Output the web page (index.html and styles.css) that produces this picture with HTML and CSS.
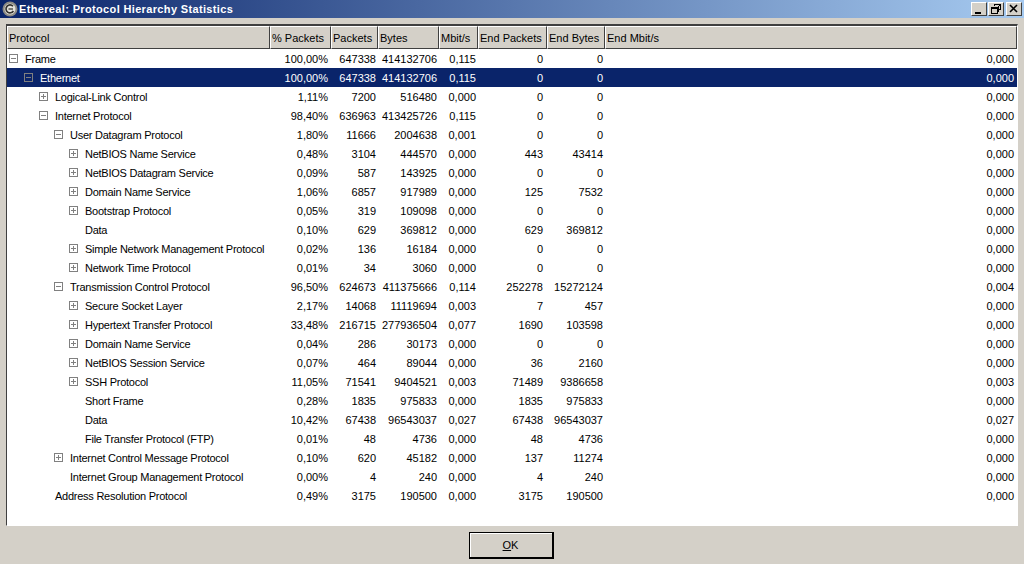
FILE: index.html
```html
<!DOCTYPE html>
<html lang="en">

<head>
  <meta charset="UTF-8" />
  <title>Ethereal: Protocol Hierarchy Statistics</title>
  <link rel="stylesheet" href="styles.css">
</head>

<body>
  <div class="window">
    <!-- title bar -->
    <div class="titlebar">
      <svg class="app-icon" width="16" height="16" viewBox="0 0 16 16">
        <circle cx="8" cy="8" r="7.5" fill="#8c8a84" />
        <circle cx="8" cy="8" r="5.5" fill="#e4e2dc" />
        <path d="M11 5.2A4 4 0 1 0 11.4 10" fill="none" stroke="#33322e" stroke-width="1.6" />
        <path d="M6.5 8H11" stroke="#33322e" stroke-width="1.2" />
      </svg>
      <span class="title">Ethereal: Protocol Hierarchy Statistics</span>
      <div class="win-buttons">
        <button class="win-btn">
          <svg width="10" height="10" viewBox="0 0 10 10"><path d="M1 8h6v2H1z" /></svg>
        </button>
        <button class="win-btn">
          <svg width="10" height="10" viewBox="0 0 10 10"><path d="M3 0h7v6H8v2H7V2H3zM4 1v1h5v3H8V1zM0 3h7v7H0zM1 5v4h5V5z" fill-rule="evenodd" /></svg>
        </button>
        <button class="win-btn win-btn-close">
          <svg width="10" height="10" viewBox="0 0 10 10"><path d="M1 1l7 7M8 1l-7 7" stroke="#000" stroke-width="1.6" fill="none" /></svg>
        </button>
      </div>
    </div>

    <!-- statistics tree -->
    <div class="list">
      <table class="stats">
        <colgroup>
          <col class="c-protocol">
          <col class="c-pct">
          <col class="c-packets">
          <col class="c-bytes">
          <col class="c-mbit">
          <col class="c-endpackets">
          <col class="c-endbytes">
          <col>
        </colgroup>
        <thead>
          <tr>
            <th>Protocol</th>
            <th>% Packets</th>
            <th>Packets</th>
            <th>Bytes</th>
            <th>Mbit/s</th>
            <th>End Packets</th>
            <th>End Bytes</th>
            <th>End Mbit/s</th>
          </tr>
        </thead>
        <tbody>
          <tr><td class="name lv0"><i class="box"></i>Frame</td><td>100,00%</td><td>647338</td><td>414132706</td><td>0,115</td><td>0</td><td>0</td><td>0,000</td></tr>
          <tr class="selected"><td class="name lv1"><i class="box"></i>Ethernet</td><td>100,00%</td><td>647338</td><td>414132706</td><td>0,115</td><td>0</td><td>0</td><td>0,000</td></tr>
          <tr><td class="name lv2"><i class="box plus"></i>Logical-Link Control</td><td>1,11%</td><td>7200</td><td>516480</td><td>0,000</td><td>0</td><td>0</td><td>0,000</td></tr>
          <tr><td class="name lv2"><i class="box"></i>Internet Protocol</td><td>98,40%</td><td>636963</td><td>413425726</td><td>0,115</td><td>0</td><td>0</td><td>0,000</td></tr>
          <tr><td class="name lv3"><i class="box"></i>User Datagram Protocol</td><td>1,80%</td><td>11666</td><td>2004638</td><td>0,001</td><td>0</td><td>0</td><td>0,000</td></tr>
          <tr><td class="name lv4"><i class="box plus"></i>NetBIOS Name Service</td><td>0,48%</td><td>3104</td><td>444570</td><td>0,000</td><td>443</td><td>43414</td><td>0,000</td></tr>
          <tr><td class="name lv4"><i class="box plus"></i>NetBIOS Datagram Service</td><td>0,09%</td><td>587</td><td>143925</td><td>0,000</td><td>0</td><td>0</td><td>0,000</td></tr>
          <tr><td class="name lv4"><i class="box plus"></i>Domain Name Service</td><td>1,06%</td><td>6857</td><td>917989</td><td>0,000</td><td>125</td><td>7532</td><td>0,000</td></tr>
          <tr><td class="name lv4"><i class="box plus"></i>Bootstrap Protocol</td><td>0,05%</td><td>319</td><td>109098</td><td>0,000</td><td>0</td><td>0</td><td>0,000</td></tr>
          <tr><td class="name lv4"><i class="box none"></i>Data</td><td>0,10%</td><td>629</td><td>369812</td><td>0,000</td><td>629</td><td>369812</td><td>0,000</td></tr>
          <tr><td class="name lv4"><i class="box plus"></i>Simple Network Management Protocol</td><td>0,02%</td><td>136</td><td>16184</td><td>0,000</td><td>0</td><td>0</td><td>0,000</td></tr>
          <tr><td class="name lv4"><i class="box plus"></i>Network Time Protocol</td><td>0,01%</td><td>34</td><td>3060</td><td>0,000</td><td>0</td><td>0</td><td>0,000</td></tr>
          <tr><td class="name lv3"><i class="box"></i>Transmission Control Protocol</td><td>96,50%</td><td>624673</td><td>411375666</td><td>0,114</td><td>252278</td><td>15272124</td><td>0,004</td></tr>
          <tr><td class="name lv4"><i class="box plus"></i>Secure Socket Layer</td><td>2,17%</td><td>14068</td><td>11119694</td><td>0,003</td><td>7</td><td>457</td><td>0,000</td></tr>
          <tr><td class="name lv4"><i class="box plus"></i>Hypertext Transfer Protocol</td><td>33,48%</td><td>216715</td><td>277936504</td><td>0,077</td><td>1690</td><td>103598</td><td>0,000</td></tr>
          <tr><td class="name lv4"><i class="box plus"></i>Domain Name Service</td><td>0,04%</td><td>286</td><td>30173</td><td>0,000</td><td>0</td><td>0</td><td>0,000</td></tr>
          <tr><td class="name lv4"><i class="box plus"></i>NetBIOS Session Service</td><td>0,07%</td><td>464</td><td>89044</td><td>0,000</td><td>36</td><td>2160</td><td>0,000</td></tr>
          <tr><td class="name lv4"><i class="box plus"></i>SSH Protocol</td><td>11,05%</td><td>71541</td><td>9404521</td><td>0,003</td><td>71489</td><td>9386658</td><td>0,003</td></tr>
          <tr><td class="name lv4"><i class="box none"></i>Short Frame</td><td>0,28%</td><td>1835</td><td>975833</td><td>0,000</td><td>1835</td><td>975833</td><td>0,000</td></tr>
          <tr><td class="name lv4"><i class="box none"></i>Data</td><td>10,42%</td><td>67438</td><td>96543037</td><td>0,027</td><td>67438</td><td>96543037</td><td>0,027</td></tr>
          <tr><td class="name lv4"><i class="box none"></i>File Transfer Protocol (FTP)</td><td>0,01%</td><td>48</td><td>4736</td><td>0,000</td><td>48</td><td>4736</td><td>0,000</td></tr>
          <tr><td class="name lv3"><i class="box plus"></i>Internet Control Message Protocol</td><td>0,10%</td><td>620</td><td>45182</td><td>0,000</td><td>137</td><td>11274</td><td>0,000</td></tr>
          <tr><td class="name lv3"><i class="box none"></i>Internet Group Management Protocol</td><td>0,00%</td><td>4</td><td>240</td><td>0,000</td><td>4</td><td>240</td><td>0,000</td></tr>
          <tr><td class="name lv2"><i class="box none"></i>Address Resolution Protocol</td><td>0,49%</td><td>3175</td><td>190500</td><td>0,000</td><td>3175</td><td>190500</td><td>0,000</td></tr>
        </tbody>
      </table>
    </div>

    <div class="footer">
      <button class="ok"><u>O</u>K</button>
    </div>
  </div>
</body>

</html>
```

FILE: styles.css
```css
* {
  margin: 0;
  padding: 0;
  box-sizing: border-box;
}

html,
body {
  height: 100%;
}

body {
  background: #d4d0c8;
  font: 11px "Liberation Sans", sans-serif;
  color: #000;
  overflow: hidden;
}

.window {
  height: 564px;
  display: flex;
  flex-direction: column;
}

.titlebar {
  height: 18px;
  flex: none;
  display: flex;
  align-items: center;
  padding: 0 2px;
  background: linear-gradient(to right, #0a246a, #a6caf0);
  color: #fff;
}

.app-icon {
  flex: none;
}

.title {
  margin-left: 1px;
  font-weight: bold;
  font-size: 11px;
  letter-spacing: 0.35px;
}

.win-buttons {
  margin-left: auto;
  display: flex;
}

.win-btn {
  width: 16px;
  height: 14px;
  margin-left: 1px;
  background: #d4d0c8;
  border: 1px solid;
  border-color: #fff #404040 #404040 #fff;
  display: flex;
  align-items: center;
  justify-content: center;
}

.win-btn-close {
  margin-left: 2px;
}

.list {
  margin: 6px 6px 0 6px;
  height: 502px;
  flex: none;
  background: #fff;
  border: 1px solid;
  border-color: #404040 #fff #fff #404040;
  border-top-width: 2px;
  overflow: hidden;
}

.stats {
  width: 100%;
  table-layout: fixed;
  border-collapse: separate;
  border-spacing: 0;
}

.c-protocol {
  width: 263px;
}

.c-pct {
  width: 61px;
}

.c-packets {
  width: 47px;
}

.c-bytes {
  width: 61px;
}

.c-mbit {
  width: 39px;
}

.c-endpackets {
  width: 69px;
}

.c-endbytes {
  width: 58px;
}

.stats th {
  height: 23px;
  padding: 1px 1px 0;
  background: #d4d0c8;
  border: 1px solid;
  border-color: #fff #404040 #404040 #fff;
  font-weight: normal;
  text-align: left;
  white-space: nowrap;
  overflow: hidden;
}

.stats td {
  height: 19px;
  padding: 0 2px;
  text-align: right;
  white-space: nowrap;
  overflow: hidden;
}

.stats td:nth-child(2),
.stats td:last-child {
  padding-right: 3px;
}

.stats td:nth-child(6) {
  padding-right: 4px;
}

.stats td.name {
  text-align: left;
  display: flex;
  align-items: center;
  letter-spacing: -0.25px;
}

.selected td {
  background: #0a246a;
  color: #fff;
}

.lv0 {
  padding-left: 2px !important;
}

.lv1 {
  padding-left: 17px !important;
}

.lv2 {
  padding-left: 32px !important;
}

.lv3 {
  padding-left: 47px !important;
}

.lv4 {
  padding-left: 62px !important;
}

/* expand / collapse box */
.box {
  width: 9px;
  height: 9px;
  margin-right: 7px;
  flex: none;
  border: 1px solid #808080;
  position: relative;
}

.box::before {
  content: "";
  position: absolute;
  left: 1px;
  top: 3px;
  width: 5px;
  height: 1px;
  background: #808080;
}

.box.plus::after {
  content: "";
  position: absolute;
  left: 3px;
  top: 1px;
  width: 1px;
  height: 5px;
  background: #808080;
}

.box.none {
  visibility: hidden;
}

.footer {
  flex: 1;
  display: flex;
  justify-content: center;
  padding: 6px 2px 0 0;
}

.ok {
  width: 85px;
  height: 27px;
  background: #d4d0c8;
  border: 1px solid #000;
  border-right-width: 2px;
  border-bottom-width: 2px;
  box-shadow: inset 1px 1px 0 #fff;
  font: 11px "Liberation Sans", sans-serif;
  color: #000;
}
```
